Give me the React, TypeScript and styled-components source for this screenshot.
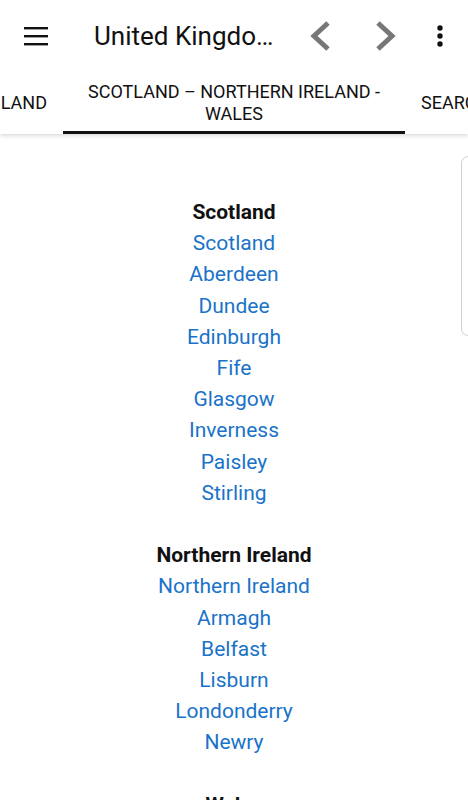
import React from 'react';
import styled, { createGlobalStyle } from 'styled-components';

const GlobalStyle = createGlobalStyle`
  html, body {
    margin: 0;
    padding: 0;
    background: #ffffff;
    font-family: Roboto, "Noto Sans", "Liberation Sans", sans-serif;
  }
  body {
    width: 468px;
    height: 800px;
    overflow: hidden;
  }
`;

const Page = styled.div`
  display: flex;
  flex-direction: column;
  width: 468px;
  height: 800px;
  overflow: hidden;
  position: relative;
`;

const Header = styled.header`
  display: flex;
  flex-direction: column;
  background: #ffffff;
  box-shadow: 0 2px 4px rgba(0, 0, 0, 0.14);
  position: relative;
  z-index: 2;
`;

const Toolbar = styled.div`
  display: flex;
  align-items: center;
  height: 72px;
  padding: 0 0 0 20px;
`;

const IconButton = styled.button<{ $width?: number }>`
  display: flex;
  align-items: center;
  justify-content: center;
  width: ${(p) => p.$width ?? 32}px;
  height: 48px;
  padding: 0;
  border: none;
  background: none;
`;

const Title = styled.h1`
  flex: 0 0 auto;
  width: 190px;
  margin: 0 0 0 42px;
  font-size: 26px;
  font-weight: 400;
  color: #111;
  white-space: nowrap;
  overflow: hidden;
  text-overflow: ellipsis;
`;

const NavGroup = styled.div`
  display: flex;
  align-items: center;
  margin-left: 18px;
  gap: 30px;
`;

const MoreButton = styled(IconButton)`
  margin-left: 21px;
`;

const TabRow = styled.nav`
  display: flex;
  justify-content: center;
  align-items: stretch;
  height: 62px;
  overflow: hidden;
`;

const Tab = styled.div<{ $active?: boolean; $width: number; $align?: string }>`
  flex: 0 0 auto;
  display: flex;
  align-items: center;
  justify-content: ${(p) => p.$align ?? 'center'};
  box-sizing: border-box;
  width: ${(p) => p.$width}px;
  padding: 3px 16px 0;
  font-size: 18px;
  line-height: 22px;
  text-align: center;
  text-transform: uppercase;
  color: #111;
  border-bottom: 3px solid ${(p) => (p.$active ? '#111' : 'transparent')};
`;

const Body = styled.main`
  flex: 1;
  position: relative;
  display: flex;
  flex-direction: column;
  align-items: center;
  padding-top: 63px;
`;

const SidePanel = styled.div`
  position: absolute;
  top: 22px;
  left: 461px;
  width: 40px;
  height: 178px;
  border: 1px solid #cfcfcf;
  border-radius: 7px;
  background: #fff;
`;

const Section = styled.section`
  display: flex;
  flex-direction: column;
  align-items: center;
  margin-bottom: 31.2px;
`;

const Heading = styled.div`
  font-size: 21px;
  line-height: 31.2px;
  font-weight: 700;
  color: #111;
`;

const Place = styled.a`
  font-size: 21px;
  line-height: 31.2px;
  color: #1a73c8;
  text-decoration: none;
`;

const sections: { title: string; places: string[] }[] = [
  {
    title: 'Scotland',
    places: ['Scotland', 'Aberdeen', 'Dundee', 'Edinburgh', 'Fife', 'Glasgow', 'Inverness', 'Paisley', 'Stirling'],
  },
  {
    title: 'Northern Ireland',
    places: ['Northern Ireland', 'Armagh', 'Belfast', 'Lisburn', 'Londonderry', 'Newry'],
  },
  {
    title: 'Wales',
    places: ['Wales', 'Cardiff', 'Newport', 'Swansea'],
  },
];

const MenuIcon = () => (
  <svg width="26" height="22" viewBox="0 0 26 22">
    <rect x="1" y="2" width="24" height="2.4" fill="#111" />
    <rect x="1" y="10" width="24" height="2.4" fill="#111" />
    <rect x="1" y="18" width="24" height="2.4" fill="#111" />
  </svg>
);

const Chevron = ({ dir }: { dir: 'left' | 'right' }) => (
  <svg width="24" height="32" viewBox="0 0 24 32">
    <path
      d={dir === 'left' ? 'M20 3 L6 16 L20 29' : 'M4 3 L18 16 L4 29'}
      fill="none"
      stroke="#777"
      strokeWidth="5"
    />
  </svg>
);

const KebabIcon = () => (
  <svg width="8" height="24" viewBox="0 0 8 24">
    <circle cx="4" cy="4" r="2.7" fill="#111" />
    <circle cx="4" cy="12" r="2.7" fill="#111" />
    <circle cx="4" cy="20" r="2.7" fill="#111" />
  </svg>
);

export default function App() {
  return (
    <Page>
      <GlobalStyle />
      <Header>
        <Toolbar>
          <IconButton $width={32}>
            <MenuIcon />
          </IconButton>
          <Title>United Kingdom Guide</Title>
          <NavGroup>
            <IconButton $width={36}>
              <Chevron dir="left" />
            </IconButton>
            <IconButton $width={36}>
              <Chevron dir="right" />
            </IconButton>
          </NavGroup>
          <MoreButton $width={30}>
            <KebabIcon />
          </MoreButton>
        </Toolbar>
        <TabRow>
          <Tab $width={120} $align="flex-end">England</Tab>
          <Tab $active $width={342}>Scotland – Northern Ireland - Wales</Tab>
          <Tab $width={120} $align="flex-start">Search</Tab>
        </TabRow>
      </Header>
      <Body>
        <SidePanel />
        {sections.map((s) => (
          <Section key={s.title}>
            <Heading>{s.title}</Heading>
            {s.places.map((p) => (
              <Place key={p} href="#">
                {p}
              </Place>
            ))}
          </Section>
        ))}
      </Body>
    </Page>
  );
}
